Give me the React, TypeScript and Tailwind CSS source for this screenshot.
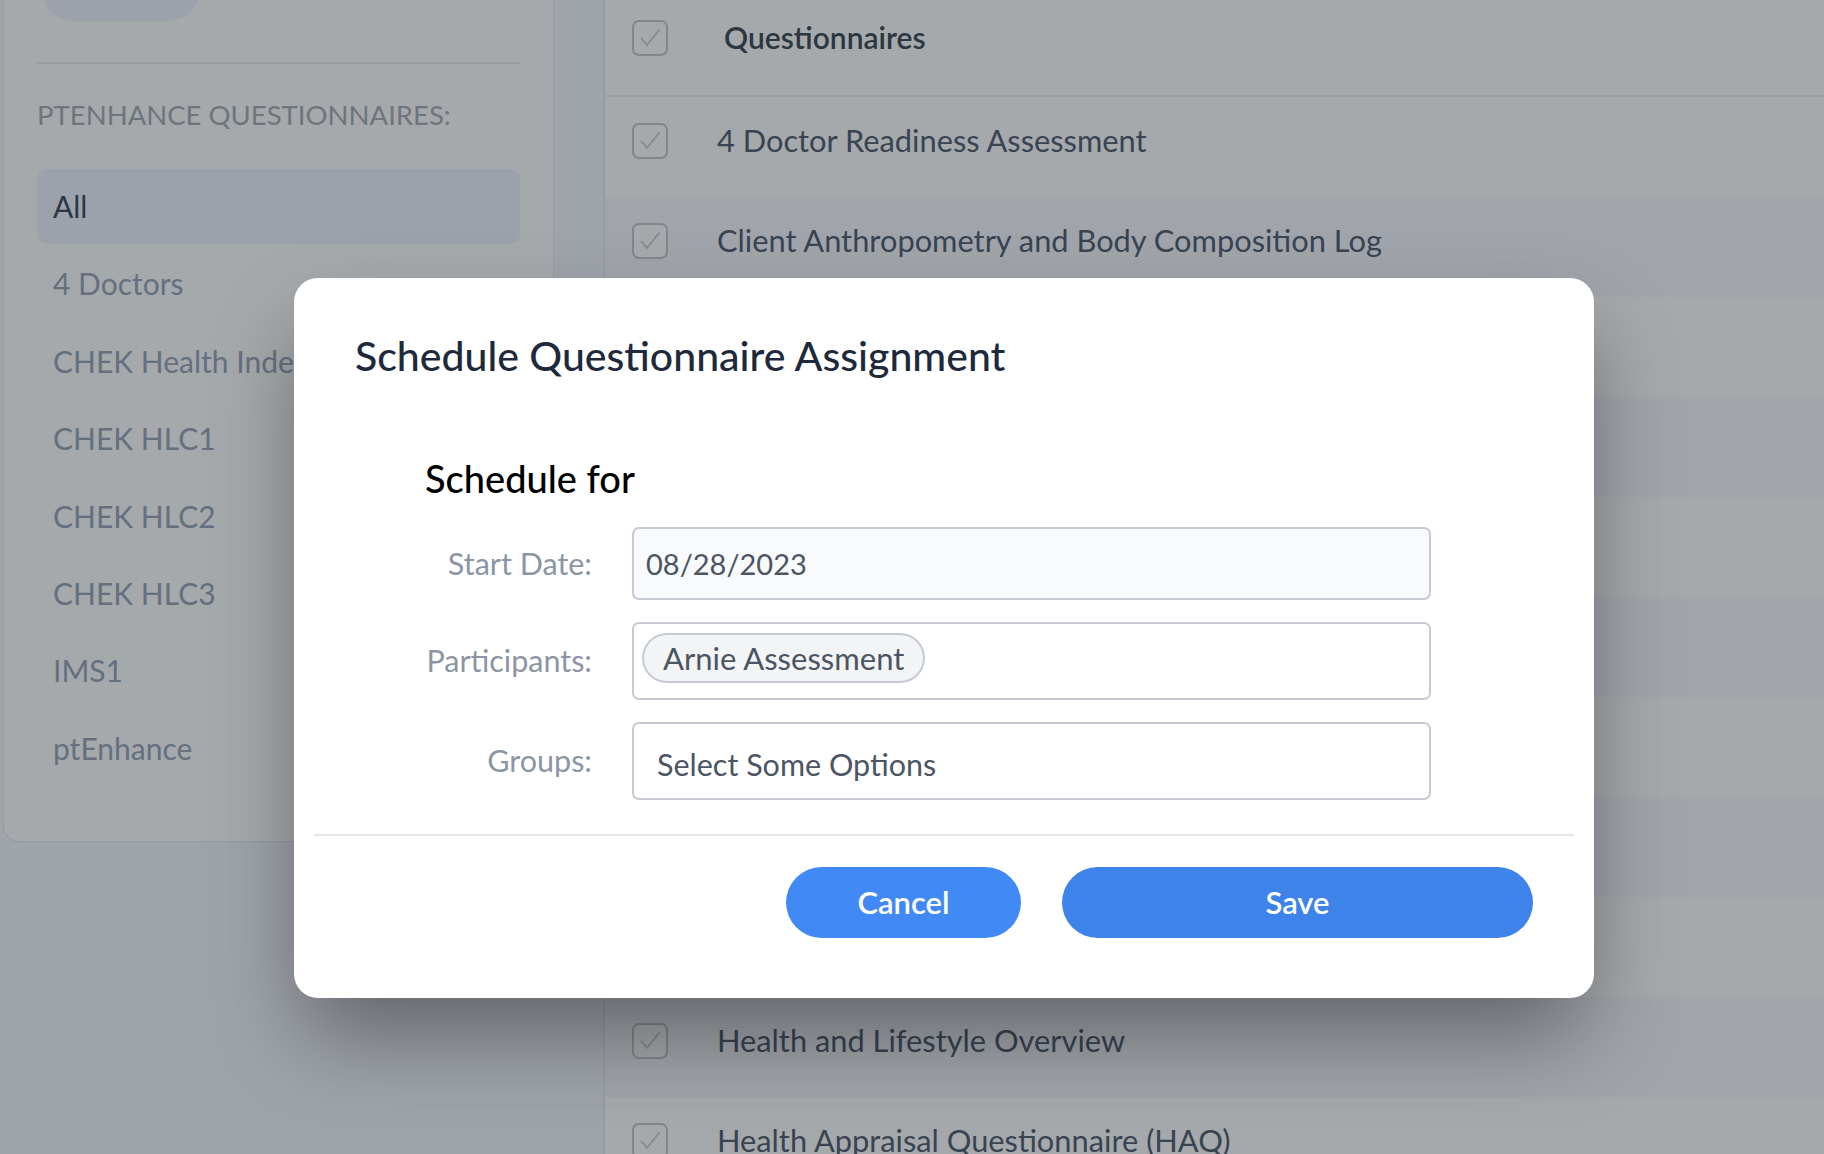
import React from 'react';

const sidebarItems = ['4 Doctors', 'CHEK Health Index', 'CHEK HLC1', 'CHEK HLC2', 'CHEK HLC3', 'IMS1', 'ptEnhance'];

// rows 2-8 sit behind the dialog, so only their stripes show
const questionnaires = [
  '4 Doctor Readiness Assessment',
  'Client Anthropometry and Body Composition Log',
  '',
  '',
  '',
  '',
  '',
  '',
  '',
  'Health and Lifestyle Overview',
  'Health Appraisal Questionnaire (HAQ)',
];

function CheckBox() {
  return (
    <svg width="36" height="36" viewBox="0 0 36 36" fill="none" className="shrink-0">
      <rect x="1" y="1" width="34" height="34" rx="6" stroke="#c3c6cc" strokeWidth="2" fill="#ffffff" />
      <path d="M9.5 18.5 L15 25 L27 10" stroke="#c9ccd1" strokeWidth="1.8" strokeLinecap="round" strokeLinejoin="round" />
    </svg>
  );
}

function Sidebar() {
  return (
    <aside className="ml-[3px] w-[551px] h-[842px] shrink-0 bg-white border-x border-b border-[#e3e6ec] rounded-b-[16px] px-[33px] flex flex-col">
      <div className="-mt-[40px] ml-[5px] w-[157px] h-[61px] rounded-full bg-[#eff4fd]" />
      <div className="mt-[41px] h-[2px] bg-[#e7e9f1]" />
      <div className="mt-[36px] h-[30px] flex items-center text-[27.5px] text-[#a4a8b0] whitespace-nowrap">
        PTENHANCE QUESTIONNAIRES:
      </div>
      <div className="mt-[39px] flex flex-col gap-[2.4px]">
        <div className="h-[75px] rounded-[10px] bg-[#eff4fd] flex items-center pl-[16px] text-[30px] text-[#374151]">
          All
        </div>
        {sidebarItems.map((item) => (
          <div key={item} className="h-[75px] flex items-center pl-[16px] text-[30px] text-[#94a1b4] whitespace-nowrap">
            {item}
          </div>
        ))}
      </div>
    </aside>
  );
}

function QuestionnaireList() {
  return (
    <main className="ml-[49px] flex-1 bg-white border-l-2 border-[#e9ebf0] min-h-[1154px]">
      <div className="h-[97px] border-b-2 border-[#eceef2] flex items-center pb-[20px] pl-[27px]">
        <CheckBox />
        <span className="ml-[56px] text-[30px] font-semibold text-[#36414d]">Questionnaires</span>
      </div>
      {questionnaires.map((q, i) => (
        <div
          key={i}
          className={`h-[100px] flex items-center pb-[12px] pl-[27px] ${i % 2 === 1 ? 'bg-[#f8f9fe]' : 'bg-white'}`}
        >
          <CheckBox />
          {q && <span className="ml-[49px] text-[30.8px] text-[#4c5669] whitespace-nowrap">{q}</span>}
        </div>
      ))}
    </main>
  );
}

function FormRow({ label, children }: { label: string; children: React.ReactNode }) {
  return (
    <div className="flex items-center">
      <div className="w-[168px] text-right text-[30.5px] text-[#8b95a4] pr-[1px] whitespace-nowrap">{label}</div>
      <div className="ml-[39px] w-[799px]">{children}</div>
    </div>
  );
}

function ScheduleModal() {
  return (
    <div className="w-[1300px] h-[720px] bg-white rounded-[24px] shadow-[0_45px_90px_-10px_rgba(0,0,0,0.4)] flex flex-col">
      <h2 className="pt-[54px] pl-[61px] h-[100px] text-[41px] leading-[48px] font-medium text-[#1e2a3b] whitespace-nowrap">
        Schedule Questionnaire Assignment
      </h2>
      <div className="ml-[131px] mt-[79px] flex flex-col">
        <h3 className="h-[42px] leading-[42px] text-[38px] font-medium text-black">Schedule for</h3>
        <div className="mt-[28px] flex flex-col gap-[22px]">
          <FormRow label="Start Date:">
            <div className="h-[73px] rounded-[7px] border-2 border-[#c6cbd3] bg-[#f8fafc] flex items-center pl-[12px] text-[29px] text-[#4b5563]">
              08/28/2023
            </div>
          </FormRow>
          <FormRow label="Participants:">
            <div className="h-[78px] rounded-[7px] border-2 border-[#c6cbd3] bg-white pt-[9px] pl-[8px]">
              <span className="inline-flex h-[50px] items-center rounded-full border-2 border-[#c6cbd3] bg-[#f3f4f6] px-[19px] text-[31px] text-[#4b5563] whitespace-nowrap">
                Arnie Assessment
              </span>
            </div>
          </FormRow>
          <FormRow label="Groups:">
            <div className="h-[78px] rounded-[7px] border-2 border-[#c6cbd3] bg-white flex items-center pt-[8px] pl-[23px] text-[30.5px] text-[#4b5563]">
              Select Some Options
            </div>
          </FormRow>
        </div>
      </div>
      <div className="mx-[20px] mt-[34px] h-[2px] bg-[#e5e7eb]" />
      <div className="mt-[31px] pr-[61px] flex justify-end gap-[41px]">
        <button className="w-[235px] h-[71px] rounded-full bg-[#418af5] text-white text-[31px] font-semibold">
          Cancel
        </button>
        <button className="w-[471px] h-[71px] rounded-full bg-[#3d83e9] text-white text-[31px] font-semibold">
          Save
        </button>
      </div>
    </div>
  );
}

export default function App() {
  return (
    <div className="relative w-[1824px] h-[1154px] overflow-hidden bg-[#f6f7fe] font-['Lato','Open_Sans',sans-serif]">
      <div className="flex">
        <Sidebar />
        <QuestionnaireList />
      </div>
      <div className="absolute inset-0 bg-[rgba(31,41,48,0.4)] pl-[294px] pt-[278px]">
        <ScheduleModal />
      </div>
    </div>
  );
}
